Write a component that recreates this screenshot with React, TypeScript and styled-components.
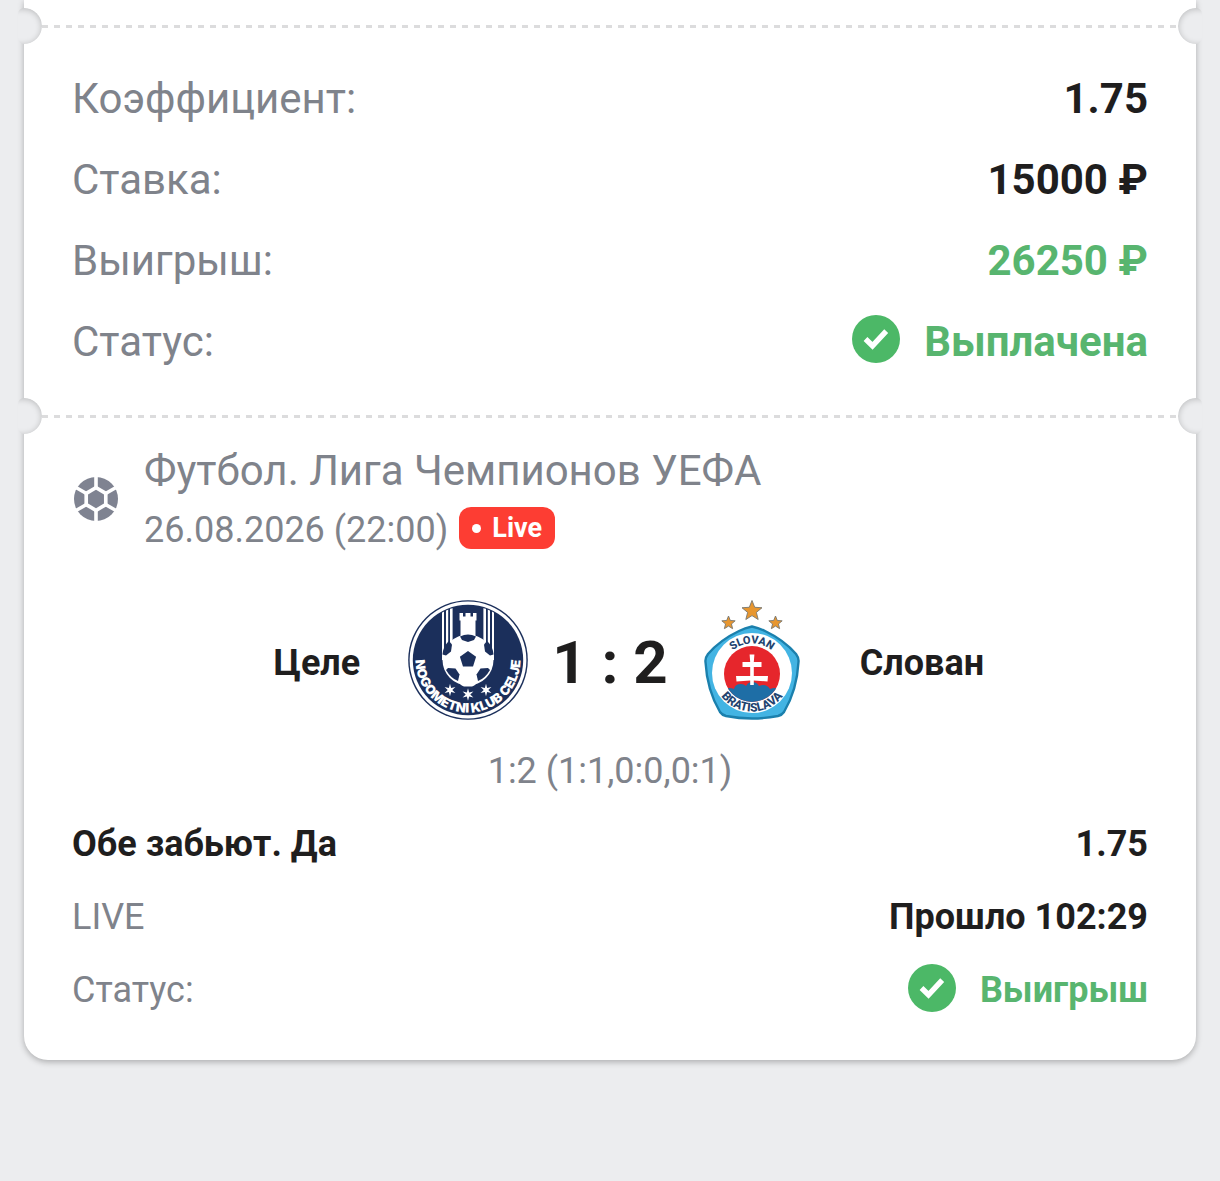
import React from "react";
import styled, { createGlobalStyle } from "styled-components";

const color = {
  page: "#ecedef",
  card: "#ffffff",
  text: "#1f1e1e",
  muted: "#7f838b",
  green: "#58b56f",
  check: "#4cb867",
  red: "#fd3d33",
  dash: "#dcdcdd",
};

const GlobalStyle = createGlobalStyle`
  *, *::before, *::after { box-sizing: border-box; }
  body {
    margin: 0;
    background: ${color.page};
    color: ${color.text};
    font-family: Roboto, "Liberation Sans", sans-serif;
  }
`;

const Page = styled.main`
  min-height: 100vh;
  padding: 0 24px 48px;
  overflow: hidden;
  background: ${color.page};
`;

const Ticket = styled.article`
  padding-top: 8px;
  background: ${color.card};
  border-radius: 0 0 24px 24px;
  box-shadow: 0 2px 6px rgba(0, 0, 0, 0.28);
`;

const Tear = styled.div`
  position: relative;
  display: flex;
  align-items: center;
  height: 36px;
  padding: 0 18px;
`;

const Dashes = styled.div`
  flex: 1;
  height: 3px;
  background: repeating-linear-gradient(
    to right,
    ${color.dash} 0 6px,
    transparent 6px 12px
  );
`;

const Notch = styled.span<{ $side: "left" | "right" }>`
  position: absolute;
  top: 0;
  ${({ $side }) => $side}: -6px;
  width: 24px;
  height: 36px;
  overflow: hidden;
  border-radius: ${({ $side }) => ($side === "left" ? "6px 18px 18px 6px" : "18px 6px 6px 18px")};
  background: ${color.page};

  &::before {
    content: "";
    position: absolute;
    top: 0;
    ${({ $side }) => $side}: -24px;
    width: 48px;
    height: 36px;
    border-radius: 18px;
    box-shadow: inset 0 1px 6px rgba(0, 0, 0, 0.22);
  }
`;

const Summary = styled.dl`
  display: grid;
  gap: 27px;
  margin: 0;
  padding: 28px 48px 29px;
  font-size: 42px;
  line-height: 54px;
`;

const Outcome = styled.dl`
  display: grid;
  gap: 24px;
  margin: 0;
  font-size: 36px;
  line-height: 49px;
`;

const Row = styled.div`
  display: flex;
  justify-content: space-between;
  align-items: center;
`;

const Label = styled.dt<{ $strong?: boolean }>`
  color: ${({ $strong }) => ($strong ? color.text : color.muted)};
  font-weight: ${({ $strong }) => ($strong ? 700 : 400)};
`;

const Value = styled.dd<{ $positive?: boolean }>`
  display: flex;
  align-items: center;
  gap: 24px;
  margin: 0;
  color: ${({ $positive }) => ($positive ? color.green : color.text)};
  font-weight: 700;
`;

const CheckSvg = styled.svg`
  display: block;
  width: 48px;
  height: 48px;
  margin: -3px 0 3px;
`;

const Match = styled.section`
  padding: 10px 48px 45px;
`;

const EventHead = styled.header`
  display: flex;
  align-items: center;
  gap: 24px;
`;

const BallSvg = styled.svg`
  flex: none;
  width: 48px;
  height: 48px;
  margin-bottom: 4px;
`;

const EventText = styled.div`
  display: grid;
  gap: 5px;
  color: ${color.muted};
  line-height: 54px;
`;

const League = styled.h2`
  margin: 0;
  font-size: 42px;
  font-weight: 400;
`;

const When = styled.div`
  display: flex;
  align-items: center;
  gap: 11px;
  font-size: 36px;
`;

const LiveBadge = styled.span`
  display: flex;
  align-items: center;
  gap: 11px;
  height: 42px;
  margin-bottom: 4px;
  padding: 0 13px;
  border-radius: 12px;
  background: ${color.red};
  color: #fff;
  font-size: 27px;
  font-weight: 700;
  line-height: 42px;

  &::before {
    content: "";
    width: 9px;
    height: 9px;
    border-radius: 50%;
    background: #fff;
  }
`;

const Scoreboard = styled.div`
  display: grid;
  grid-template-columns: 1fr auto auto auto 1fr;
  align-items: center;
  margin: 43px 0 27px;
`;

const Team = styled.span<{ $home?: boolean }>`
  padding: 6px 48px 0;
  text-align: ${({ $home }) => ($home ? "right" : "left")};
  font-size: 36px;
  font-weight: 700;
  line-height: 49px;
`;

const Score = styled.strong`
  padding: 6px 24px 0;
  font-size: 60px;
  font-weight: 700;
  line-height: 72px;
`;

const Crest = styled.svg`
  display: block;
  width: 120px;
  height: 120px;
`;

const Periods = styled.p`
  margin: 0 0 24px;
  color: ${color.muted};
  text-align: center;
  font-size: 36px;
  line-height: 49px;
`;

function CheckIcon() {
  return (
    <CheckSvg viewBox="0 0 48 48" aria-hidden="true">
      <circle cx="24" cy="24" r="24" fill={color.check} />
      <path d="M13.5 24l7 6.8 13.7-14.6" fill="none" stroke="#fff" strokeWidth="5.4" />
    </CheckSvg>
  );
}

function polygon(cx: number, cy: number, r: number, sides: number, turn = -90) {
  return Array.from({ length: sides }, (_, i) => {
    const a = ((turn + (360 / sides) * i) * Math.PI) / 180;
    return `${(cx + r * Math.cos(a)).toFixed(2)},${(cy + r * Math.sin(a)).toFixed(2)}`;
  }).join(" ");
}

function star(cx: number, cy: number, outer: number, inner: number, tips: number) {
  return Array.from({ length: tips * 2 }, (_, i) => {
    const a = ((-90 + (180 / tips) * i) * Math.PI) / 180;
    const r = i % 2 ? inner : outer;
    return `${(cx + r * Math.cos(a)).toFixed(2)},${(cy + r * Math.sin(a)).toFixed(2)}`;
  }).join(" ");
}

function BallIcon() {
  return (
    <BallSvg viewBox="0 0 48 48" aria-hidden="true">
      <circle cx="24" cy="24" r="22" fill="#7f8391" />
      <g stroke="#fff" strokeWidth="3.6">
        <path d="M24 1v46M4 12.5l40 23M44 12.5l-40 23" />
      </g>
      <polygon points={polygon(24, 24, 13.4, 6)} fill="#fff" />
      <polygon points={polygon(24, 24, 9.2, 6)} fill="#7f8391" />
    </BallSvg>
  );
}

function CeljeCrest() {
  const navy = "#1b2f5b";
  return (
    <Crest viewBox="0 0 120 120" role="img" aria-label="Целе">
      <defs>
        <clipPath id="celje-disc">
          <circle cx="60" cy="60" r="54" />
        </clipPath>
        <path id="celje-arc" d="M14.4 34 A52.5 52.5 0 1 0 105.6 34" />
      </defs>
      <circle cx="60" cy="60" r="59.8" fill={navy} />
      <circle cx="60" cy="60" r="58.4" fill="#fff" />
      <circle cx="60" cy="60" r="55.2" fill={navy} />
      <g fill="#fff" clipPath="url(#celje-disc)">
        <path d="M34 6h2v54h-2zM38 6h2.2v54H38zM42 6h2.6v40H42zM84 6h2v54h-2zM79.800 6H82v54h-2.200zM75.400 6H78v40h-2.600z" />
        <path d="M51.500 13h3.500v3.500h2.500V13h5v3.500H65V13h3.500v7.500h-1V37h-15V20.500h-1z" />
      </g>
      <circle cx="60" cy="60" r="25.500" fill="#fff" />
      <g fill={navy}>
        <polygon points={polygon(60, 59.500, 8.500, 5)} />
        <path d="M52 36.500q8-4 16 0l-2 3.500-6 2-6-2z" />
        <path d="M35 51q1.500-6 6-10l3 3.500-1 7-5 4-3.500-1z" />
        <path d="M85 51q-1.500-6-6-10l-3 3.500 1 7 5 4 3.500-1z" />
        <path d="M40 68l7.500 .5 4 6-1.500 6.500q-7-2.500-12-11z" />
        <path d="M80 68l-7.500 .5-4 6 1.500 6.500q7-2.500 12-11z" />
      </g>
      <path d="M51 81.500h18q-1 4-5 5h-8q-4-1-5-5z" fill="#fff" />
      <g fill="#fff">
        <polygon points={star(42, 90, 6.200, 2.300, 6)} />
        <polygon points={star(60, 94.500, 6.200, 2.300, 6)} />
        <polygon points={star(78, 90, 6.200, 2.300, 6)} />
      </g>
      <text fill="#fff" fontFamily="Inter, Roboto, sans-serif" fontSize="13" fontWeight="900" textAnchor="middle">
        <textPath href="#celje-arc" startOffset="50%">
          NOGOMETNI KLUB CELJE
        </textPath>
      </text>
    </Crest>
  );
}

function SlovanCrest() {
  return (
    <Crest viewBox="0 0 120 120" role="img" aria-label="Слован">
      <defs>
        <clipPath id="slovan-disc">
          <circle cx="60" cy="74" r="28" />
        </clipPath>
        <path id="slovan-top" d="M29.500 74 A30.500 30.500 0 0 1 90.500 74" />
        <path id="slovan-bottom" d="M21.500 73 A38.500 38.500 0 0 0 98.500 73" />
      </defs>
      <g fill="#e7962f" stroke="#77766f" strokeWidth="0.900">
        <polygon points={star(60, 11, 10.500, 4.600, 5)} />
        <polygon points={star(36.500, 23, 7, 3.100, 5)} />
        <polygon points={star(83.500, 23, 7, 3.100, 5)} />
      </g>
      <path
        d="M60 26.500Q67 28 73 31Q92 40 104 54Q107 58 106.500 62Q105 90 92 112Q90 115 86 116Q60 121 34 116Q30 115 28 112Q15 90 13.500 62Q13 58 16 54Q28 40 47 31Q53 28 60 26.500z"
        fill="#43b4e3"
        stroke="#1b80ad"
        strokeWidth="2.400"
      />
      <circle cx="60" cy="73" r="40" fill="#fff" />
      <circle cx="60" cy="74" r="28" fill="#e6262c" />
      <g clipPath="url(#slovan-disc)">
        <path
          d="M30 104V92q5-6 12-3q1-5 7-5q3 0 5 2q2-4 6-4q5 0 7 4q7-3 11 3q8-3 12 4v11z"
          fill="#1e6ea6"
        />
      </g>
      <path d="M57.600 54.500h4.800l-.6 7.500h7.700v5h-7.700v9H76l-.5 5.500-13.700-1V85h-3.600v-4.500l-13.700 1L44 76h14.200v-9h-7.700v-5h7.700z" fill="#fff" />
      <g fill="#22436f" fontFamily="Roboto, sans-serif" fontWeight="800" textAnchor="middle">
        <text fontSize="11">
          <textPath href="#slovan-top" startOffset="50%">
            SLOVAN
          </textPath>
        </text>
        <text fontSize="12">
          <textPath href="#slovan-bottom" startOffset="50%">
            BRATISLAVA
          </textPath>
        </text>
      </g>
    </Crest>
  );
}

function TearLine() {
  return (
    <Tear aria-hidden="true">
      <Notch $side="left" />
      <Dashes />
      <Notch $side="right" />
    </Tear>
  );
}

interface FieldProps {
  label: string;
  value: string;
  strong?: boolean;
  positive?: boolean;
  checked?: boolean;
}

function Field({ label, value, strong, positive, checked }: FieldProps) {
  return (
    <Row>
      <Label $strong={strong}>{label}</Label>
      <Value $positive={positive}>
        {checked && <CheckIcon />}
        {value}
      </Value>
    </Row>
  );
}

export default function App() {
  return (
    <>
      <GlobalStyle />
      <Page>
        <Ticket>
          <TearLine />
          <Summary>
            <Field label="Коэффициент:" value="1.75" />
            <Field label="Ставка:" value="15000 ₽" />
            <Field label="Выигрыш:" value="26250 ₽" positive />
            <Field label="Статус:" value="Выплачена" positive checked />
          </Summary>
          <TearLine />
          <Match>
            <EventHead>
              <BallIcon />
              <EventText>
                <League>Футбол. Лига Чемпионов УЕФА</League>
                <When>
                  <time dateTime="2026-08-26T22:00">26.08.2026 (22:00)</time>
                  <LiveBadge>Live</LiveBadge>
                </When>
              </EventText>
            </EventHead>
            <Scoreboard>
              <Team $home>Целе</Team>
              <CeljeCrest />
              <Score>1 : 2</Score>
              <SlovanCrest />
              <Team>Слован</Team>
            </Scoreboard>
            <Periods>1:2 (1:1,0:0,0:1)</Periods>
            <Outcome>
              <Field label="Обе забьют. Да" value="1.75" strong />
              <Field label="LIVE" value="Прошло 102:29" />
              <Field label="Статус:" value="Выигрыш" positive checked />
            </Outcome>
          </Match>
        </Ticket>
      </Page>
    </>
  );
}
